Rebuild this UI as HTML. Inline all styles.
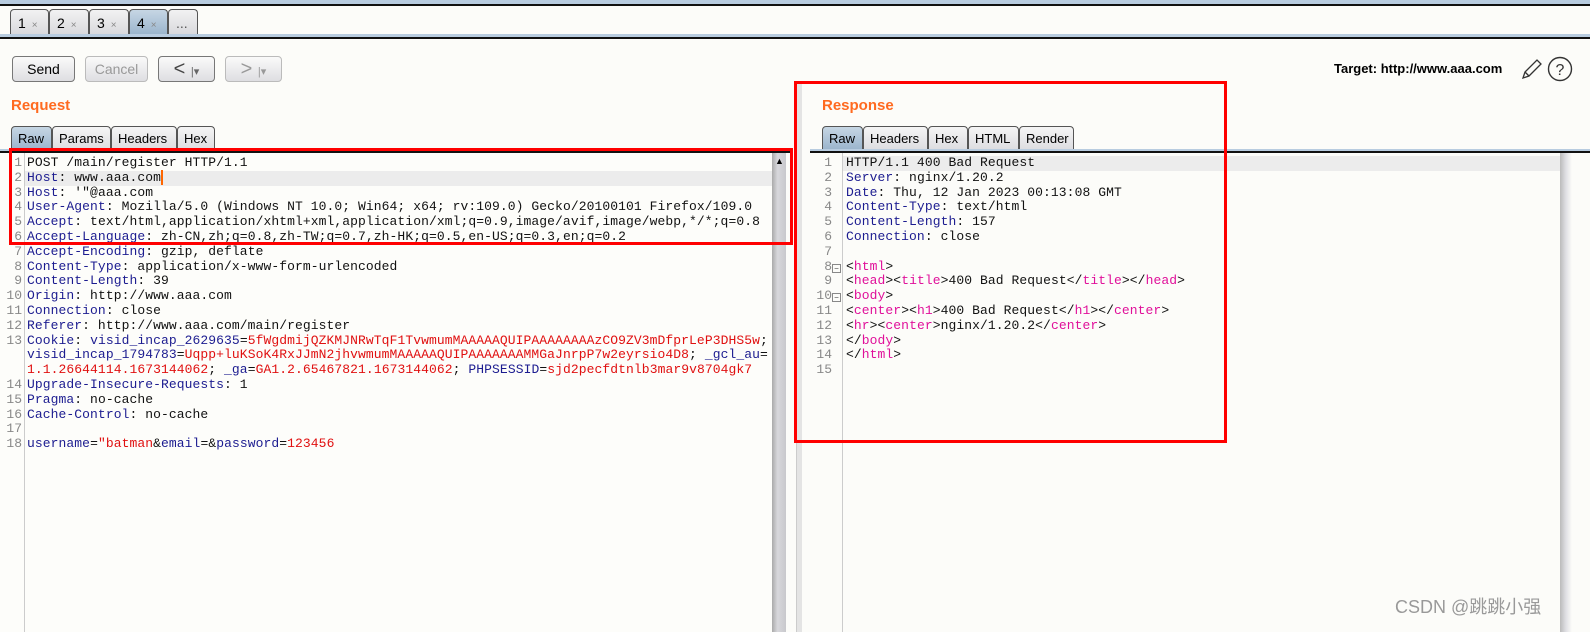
<!DOCTYPE html>
<html><head><meta charset="utf-8"><style>
*{margin:0;padding:0;box-sizing:border-box}
body{width:1590px;height:632px;background:#fcfcf9;position:relative;overflow:hidden;font-family:"Liberation Sans",Arial,sans-serif}
.a{position:absolute}
.tab{position:absolute;top:9px;height:26px;border:1px solid #555;border-bottom:none;border-radius:4px 4px 0 0;background:linear-gradient(#f2f2f2,#d8d8dc);font-size:14px;padding:5px 0 0 7px;color:#000}
.tab i{font-style:normal;color:#888;font-size:10px;margin-left:6px}
.btn{position:absolute;top:56px;height:26px;border:1px solid #777;border-radius:4px;background:linear-gradient(#fafafa,#dedee2);font-size:14px;text-align:center;line-height:24px}
.h{position:absolute;color:#ff6a20;font-weight:bold;font-size:15px}
.st{position:absolute;top:126px;height:24px;border:1px solid #555;border-bottom:none;border-radius:4px 4px 0 0;background:linear-gradient(#f5f5f5,#dcdce0);font-size:13px;padding:4px 6px 0}
.st.sel{background:linear-gradient(#c6d6e4,#9ab4cc)}
.code{position:absolute;font-family:"Liberation Mono",monospace;font-size:13px;letter-spacing:0.08px;line-height:14.8px;white-space:pre;color:#111}
.ln{position:absolute;font-family:"Liberation Mono",monospace;font-size:13px;line-height:14.8px;white-space:pre;color:#888;text-align:right}
.k{color:#1c1c90}.v{color:#e01010}.t{color:#e0109a}
</style></head><body>
<div class="a" style="left:0;top:0;width:1590px;height:4px;background:#b8cce0"></div>
<div class="a" style="left:0;top:4px;width:1590px;height:2px;background:#111"></div>
<div class="tab" style="left:10px;width:39px">1<i>×</i></div>
<div class="tab" style="left:49px;width:40px">2<i>×</i></div>
<div class="tab" style="left:89px;width:40px">3<i>×</i></div>
<div class="tab" style="left:129px;width:39px;background:linear-gradient(#c6d6e4,#9ab4cc)">4<i>×</i></div>
<div class="tab" style="left:168px;width:30px;color:#555;padding-left:7px">...</div>
<div class="a" style="left:0;top:34px;width:1590px;height:3px;background:#b8cce0"></div>
<div class="a" style="left:0;top:37px;width:1590px;height:2px;background:#111"></div>

<div class="btn" style="left:12px;width:63px">Send</div>
<div class="btn" style="left:85px;width:63px;color:#999;border-color:#bbb">Cancel</div>
<div class="btn" style="left:158px;width:57px;font-size:20px;color:#444">&lt; <span style="font-size:11px;color:#666">|▾</span></div>
<div class="btn" style="left:225px;width:57px;font-size:20px;color:#999;border-color:#bbb">&gt; <span style="font-size:11px">|▾</span></div>
<div class="a" style="left:1334px;top:61px;font-size:13px;font-weight:bold">Target: http://www.aaa.com</div>
<svg class="a" style="left:1520px;top:57px" width="24" height="24" viewBox="0 0 24 24"><path d="M3 21l2-6L17 3l4 4L9 19z M5 15l4 4" fill="none" stroke="#333" stroke-width="1.3"/></svg>
<svg class="a" style="left:1547px;top:56px" width="26" height="26" viewBox="0 0 26 26"><circle cx="13" cy="13" r="11.5" fill="none" stroke="#333" stroke-width="1.4"/><text x="13" y="19" font-size="16" text-anchor="middle" font-family="Liberation Sans" fill="#333">?</text></svg>

<div class="h" style="left:11px;top:97px">Request</div>
<div class="st sel" style="left:11px;width:41px">Raw</div>
<div class="st" style="left:52px;width:59px">Params</div>
<div class="st" style="left:111px;width:66px">Headers</div>
<div class="st" style="left:177px;width:38px">Hex</div>
<div class="a" style="left:0;top:149px;width:790px;height:2px;background:#b8cce0"></div>
<div class="a" style="left:0;top:151px;width:790px;height:2px;background:#111"></div>
<div class="a" style="left:0;top:153px;width:772px;height:479px;background:#fdfdfa"></div>
<div class="a" style="left:24px;top:153px;width:1px;height:479px;background:#ccc"></div>
<div class="a" style="left:25px;top:171px;width:747px;height:15px;background:#ececec"></div>
<div class="a" style="left:772px;top:153px;width:14px;height:479px;background:linear-gradient(90deg,#aaa,#d8d8dc 40%,#c8c8cc)"></div>
<div class="a" style="left:775px;top:156px;font-size:9px">▲</div>
<div class="a" style="left:796px;top:82px;width:6px;height:550px;background:#e4e4e4;border-left:1px solid #ccc"></div>
<div class="ln" style="left:0;top:156px;width:22px">1
2
3
4
5
6
7
8
9
10
11
12
13


14
15
16
17
18</div>
<div class="code" style="left:27px;top:156px">POST /main/register HTTP/1.1
<span class="k">Host</span>: www.aaa.com<span style="border-left:2px solid #f60"></span>
<span class="k">Host</span>: '"@aaa.com
<span class="k">User-Agent</span>: Mozilla/5.0 (Windows NT 10.0; Win64; x64; rv:109.0) Gecko/20100101 Firefox/109.0
<span class="k">Accept</span>: text/html,application/xhtml+xml,application/xml;q=0.9,image/avif,image/webp,*/*;q=0.8
<span class="k">Accept-Language</span>: zh-CN,zh;q=0.8,zh-TW;q=0.7,zh-HK;q=0.5,en-US;q=0.3,en;q=0.2
<span class="k">Accept-Encoding</span>: gzip, deflate
<span class="k">Content-Type</span>: application/x-www-form-urlencoded
<span class="k">Content-Length</span>: 39
<span class="k">Origin</span>: http://www.aaa.com
<span class="k">Connection</span>: close
<span class="k">Referer</span>: http://www.aaa.com/main/register
<span class="k">Cookie</span>: <span class="k">visid_incap_2629635</span>=<span class="v">5fWgdmijQZKMJNRwTqF1TvwmumMAAAAAQUIPAAAAAAAAzCO9ZV3mDfprLeP3DHS5w</span>;
<span class="k">visid_incap_1794783</span>=<span class="v">Uqpp+luKSoK4RxJJmN2jhvwmumMAAAAAQUIPAAAAAAAMMGaJnrpP7w2eyrsio4D8</span>; <span class="k">_gcl_au</span>=
<span class="v">1.1.26644114.1673144062</span>; <span class="k">_ga</span>=<span class="v">GA1.2.65467821.1673144062</span>; <span class="k">PHPSESSID</span>=<span class="v">sjd2pecfdtnlb3mar9v8704gk7</span>
<span class="k">Upgrade-Insecure-Requests</span>: 1
<span class="k">Pragma</span>: no-cache
<span class="k">Cache-Control</span>: no-cache

<span class="k">username</span>=<span class="v">"batman</span>&amp;<span class="k">email</span>=&amp;<span class="k">password</span>=<span class="v">123456</span></div>

<div class="h" style="left:822px;top:97px">Response</div>
<div class="st sel" style="left:822px;width:41px">Raw</div>
<div class="st" style="left:863px;width:65px">Headers</div>
<div class="st" style="left:928px;width:40px">Hex</div>
<div class="st" style="left:968px;width:51px">HTML</div>
<div class="st" style="left:1019px;width:55px">Render</div>
<div class="a" style="left:810px;top:149px;width:780px;height:2px;background:#b8cce0"></div>
<div class="a" style="left:810px;top:151px;width:780px;height:2px;background:#111"></div>
<div class="a" style="left:842px;top:153px;width:1px;height:479px;background:#ccc"></div>
<div class="a" style="left:843px;top:156px;width:717px;height:15px;background:#ececec"></div>
<div class="a" style="left:1560px;top:153px;width:30px;height:479px;background:linear-gradient(90deg,#bbb,#e0e0e4 20%,#fcfcf9 40%)"></div>
<div class="ln" style="left:810px;top:156px;width:22px">1
2
3
4
5
6
7
8
9
10
11
12
13
14
15</div>
<div class="a" style="left:832px;top:264px;width:9px;height:9px;border:1px solid #888;font-size:8px;line-height:7px;text-align:center;color:#444">−</div>
<div class="a" style="left:832px;top:293px;width:9px;height:9px;border:1px solid #888;font-size:8px;line-height:7px;text-align:center;color:#444">−</div>
<div class="code" style="left:846px;top:156px">HTTP/1.1 400 Bad Request
<span class="k">Server</span>: nginx/1.20.2
<span class="k">Date</span>: Thu, 12 Jan 2023 00:13:08 GMT
<span class="k">Content-Type</span>: text/html
<span class="k">Content-Length</span>: 157
<span class="k">Connection</span>: close

&lt;<span class="t">html</span>&gt;
&lt;<span class="t">head</span>&gt;&lt;<span class="t">title</span>&gt;400 Bad Request&lt;/<span class="t">title</span>&gt;&lt;/<span class="t">head</span>&gt;
&lt;<span class="t">body</span>&gt;
&lt;<span class="t">center</span>&gt;&lt;<span class="t">h1</span>&gt;400 Bad Request&lt;/<span class="t">h1</span>&gt;&lt;/<span class="t">center</span>&gt;
&lt;<span class="t">hr</span>&gt;&lt;<span class="t">center</span>&gt;nginx/1.20.2&lt;/<span class="t">center</span>&gt;
&lt;/<span class="t">body</span>&gt;
&lt;/<span class="t">html</span>&gt;
</div>

<div class="a" style="left:9px;top:148px;width:784px;height:97px;border:3px solid #f00"></div>
<div class="a" style="left:794px;top:81px;width:433px;height:362px;border:3px solid #f00"></div>
<div class="a" style="left:1395px;top:593px;font-size:18px;color:#999;font-family:'Liberation Sans','Noto Sans CJK SC',sans-serif">CSDN @跳跳小强</div>
</body></html>
